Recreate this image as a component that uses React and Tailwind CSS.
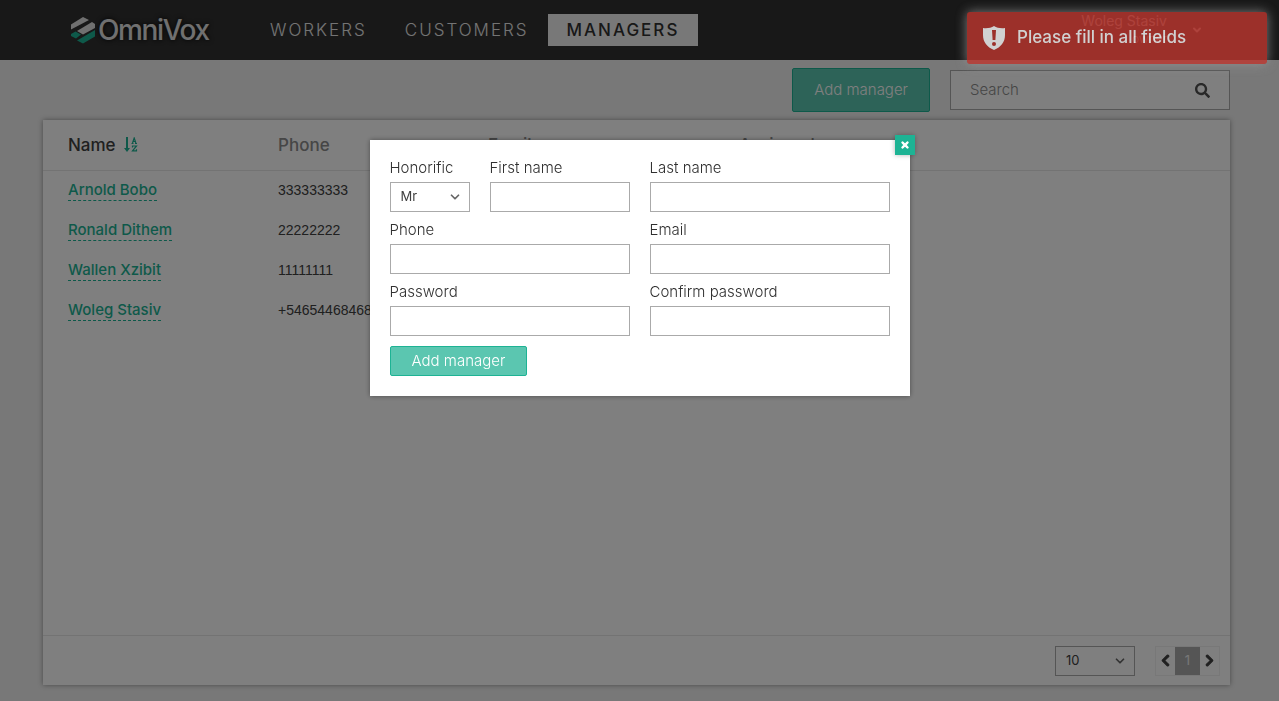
import { useId, useState } from "react";
import { FaChevronLeft, FaChevronRight, FaSearch } from "react-icons/fa";
import { FaXmark } from "react-icons/fa6";
import { ChevronDown } from "lucide-react";

const managers = [
  { name: "Arnold Bobo", phone: "333333333" },
  { name: "Ronald Dithem", phone: "22222222" },
  { name: "Wallen Xzibit", phone: "11111111" },
  { name: "Woleg Stasiv", phone: "+546544684684" },
];

function Logo() {
  return (
    <a href="#" className="flex w-[181px] items-center gap-[2px] text-[#e0e0e0]" aria-label="OmniVox">
      <svg width="26" height="28" viewBox="0 0 26 28" aria-hidden="true">
        <path d="M1 8.500 13 1l6 3L1 13.500z" fill="#e0e0e0" />
        <path d="M7 15 22 6l3 2v4L13 18.500z" fill="#e0e0e0" />
        <path d="M1 18l4.500-2.500L11 18.500l-5 4-5-2.500z" fill="#1db394" />
        <path d="M7 24.500 25 14v6.500L13 27.500z" fill="#1db394" />
      </svg>
      <span className="text-[28px] leading-7 font-medium tracking-tighter [text-shadow:0_0_5px_black]">OmniVox</span>
    </a>
  );
}

function NavLink({ children, active }) {
  return (
    <a
      href="#"
      className={
        active
          ? "bg-[#f0f0f0] px-[19px] leading-8 font-medium text-[#303030]"
          : "px-[19px] leading-8 font-light text-[#e8e8e8]"
      }
    >
      {children}
    </a>
  );
}

function Header() {
  return (
    <header className="flex h-[60px] shrink-0 items-center bg-[#303030] pr-[76px] pl-[70px]">
      <Logo />
      <nav className="flex flex-1 text-[17px] tracking-[2px]">
        <NavLink>WORKERS</NavLink>
        <NavLink>CUSTOMERS</NavLink>
        <NavLink active>MANAGERS</NavLink>
      </nav>
      <button type="button" className="flex items-center gap-6 text-right text-[#e0e0e0]">
        <span className="flex flex-col">
          <span className="text-sm leading-[18px]">Woleg Stasiv</span>
          <span className="text-xs leading-[18px] font-light">owner</span>
        </span>
        <ChevronDown size={12} strokeWidth={4} />
      </button>
    </header>
  );
}

function SortIcon() {
  return (
    <svg width="14" height="15" viewBox="0 0 14 15" fill="none" stroke="#1db394" aria-hidden="true">
      <path d="M3 0v12" strokeWidth="2" />
      <path d="M0 11h6l-3 4z" fill="#1db394" stroke="none" />
      <path d="M7.500 6.500h2M11 6.500h2M8.500 6l1.700-5 1.700 5M9 4.500h2.500" strokeWidth="1.200" />
      <path d="M8.500 10.500V9h4L8.500 13.800h4v-1.500" strokeWidth="1.200" />
    </svg>
  );
}

function ManagersTable() {
  return (
    <table className="w-full table-fixed text-left text-[15px] leading-5">
      <thead>
        <tr className="h-[50px] border-b border-[#e6e6e6] text-[17px] text-[#8c8c8c]">
          <th className="w-[235px] pl-[25px] font-medium text-[#404040]">
            <button type="button" className="flex items-center gap-2">
              Name <SortIcon />
            </button>
          </th>
          <th className="w-[210px] font-medium">Phone</th>
          <th className="w-[251px] font-medium">Email</th>
          <th className="font-medium">Assigned</th>
        </tr>
      </thead>
      <tbody>
        {managers.map((m) => (
          <tr key={m.name} className="h-10">
            <td className="pl-[25px]">
              <a href="#" className="inline-block border-b border-dashed border-[#1db394] font-medium text-[#1db394]">
                {m.name}
              </a>
            </td>
            <td className="font-['Liberation_Sans',sans-serif] text-sm text-[#404040]">{m.phone}</td>
            <td />
            <td />
          </tr>
        ))}
      </tbody>
    </table>
  );
}

function SelectBox({ options, ...props }) {
  return (
    <div className="relative w-20">
      <select
        {...props}
        className="block h-[30px] w-full appearance-none border border-[#aaaaaa] bg-white pl-[10px] text-[13px] text-[#404040]"
      >
        {options.map((o) => (
          <option key={o}>{o}</option>
        ))}
      </select>
      <ChevronDown size={14} strokeWidth={3} className="pointer-events-none absolute top-2 right-2 text-[#666666]" />
    </div>
  );
}

function Label({ htmlFor, children }) {
  return (
    <label htmlFor={htmlFor} className="block text-[15px] leading-7 font-light text-[#303030]">
      {children}
    </label>
  );
}

function Field({ label, type = "text", className }) {
  const id = useId();
  return (
    <div className={className}>
      <Label htmlFor={id}>{label}</Label>
      <input id={id} type={type} className="block h-[30px] w-full border border-[#aaaaaa] px-2 text-sm" />
    </div>
  );
}

function Pagination() {
  return (
    <div className="flex h-[50px] items-center justify-end gap-5 border-t border-[#e6e6e6] pr-[10px]">
      <SelectBox aria-label="Rows per page" options={["10", "25", "50"]} />
      <nav className="flex h-[30px] border border-[#f0f0f0] text-[#404040]" aria-label="Pages">
        <button type="button" aria-label="Previous" className="grid w-[19px] place-items-center">
          <FaChevronLeft size={13} stroke="currentColor" strokeWidth={40} />
        </button>
        <button type="button" className="w-[25px] bg-[#aaaaaa] text-[13px] text-[#f0f0f0]">
          1
        </button>
        <button type="button" aria-label="Next" className="grid w-[19px] place-items-center">
          <FaChevronRight size={13} stroke="currentColor" strokeWidth={40} />
        </button>
      </nav>
    </div>
  );
}

function ManagerDialog({ onClose }) {
  const honorificId = useId();
  return (
    <div className="fixed inset-0 flex items-start justify-center bg-black/50 pt-[140px]">
      <div
        role="dialog"
        aria-label="Add manager"
        className="relative w-[540px] bg-white px-5 pt-[14px] pb-5 shadow-[0_0_5px_rgba(0,0,0,0.4)]"
      >
        <button
          type="button"
          aria-label="Close"
          onClick={onClose}
          className="absolute -top-[5px] -right-[5px] grid size-5 place-items-center bg-[#1db394] text-white shadow-[0_0_5px_rgba(0,0,0,0.3)]"
        >
          <FaXmark size={10} strokeWidth={60} stroke="white" />
        </button>
        <form className="grid grid-cols-2 gap-x-5 gap-y-1" onSubmit={(e) => e.preventDefault()}>
          <div className="flex gap-5">
            <div>
              <Label htmlFor={honorificId}>Honorific</Label>
              <SelectBox id={honorificId} options={["Mr", "Mrs", "Ms"]} />
            </div>
            <Field label="First name" className="flex-1" />
          </div>
          <Field label="Last name" />
          <Field label="Phone" />
          <Field label="Email" />
          <Field label="Password" type="password" />
          <Field label="Confirm password" type="password" />
          <div className="col-span-2 pt-[6px]">
            <button
              type="submit"
              className="block h-[30px] rounded-xs border border-[#1db394] bg-[#5bc6b0] px-[21px] text-[15px] leading-6 font-light text-white"
            >
              Add manager
            </button>
          </div>
        </form>
      </div>
    </div>
  );
}

function Toast() {
  return (
    <div
      role="alert"
      className="fixed top-3 right-3 flex h-[52px] w-[300px] items-center gap-3 rounded-[3px] bg-[#bd362f] pl-4 text-[17px] font-medium text-white opacity-80 shadow-[0_0_12px_#999999]"
    >
      <svg width="22" height="24" viewBox="0 0 22 24" aria-hidden="true">
        <path d="M11 0c3 2 7 2.500 11 2v7c0 7-4 12-11 15C4 21 0 16 0 9V2c4 .5 8 0 11-2z" fill="white" />
        <path d="M9 4h4l-.6 10H9.600z" fill="#bd362f" />
        <circle cx="11" cy="18" r="2" fill="#bd362f" />
      </svg>
      Please fill in all fields
    </div>
  );
}

export default function App() {
  const [open, setOpen] = useState(true);
  return (
    <div className="flex min-h-screen flex-col bg-[#f0f0f0] font-[Inter,sans-serif]">
      <Header />
      <main className="flex flex-1 flex-col pr-[49px] pb-4 pl-[43px]">
        <div className="flex h-[60px] items-center justify-end gap-5">
          <button
            type="button"
            onClick={() => setOpen(true)}
            className="h-11 rounded-xs border border-[#1db394] bg-[#5bc6b0] px-[21px] text-[15px] font-light text-white"
          >
            Add manager
          </button>
          <div className="flex h-10 w-[280px] items-center border border-[#aaaaaa] bg-white px-[19px]">
            <input
              type="search"
              aria-label="Search"
              placeholder="Search"
              className="min-w-0 flex-1 text-[15px] font-light placeholder:text-[#8c8c8c]"
            />
            <FaSearch size={15} className="text-[#505050]" />
          </div>
        </div>
        <section className="flex flex-1 flex-col bg-white shadow-[0_0_5px_rgba(0,0,0,0.4)]">
          <div className="flex-1">
            <ManagersTable />
          </div>
          <Pagination />
        </section>
      </main>
      {open && <ManagerDialog onClose={() => setOpen(false)} />}
      <Toast />
    </div>
  );
}
